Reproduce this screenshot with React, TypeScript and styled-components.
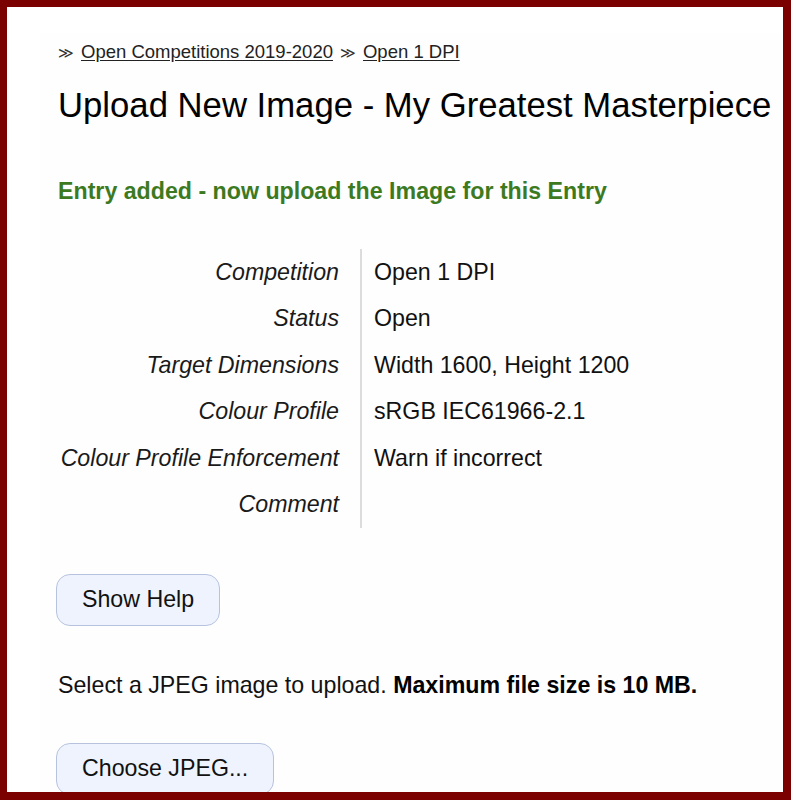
import React from "react";
import styled, { createGlobalStyle } from "styled-components";

const GlobalStyle = createGlobalStyle`
  html, body {
    margin: 0;
    padding: 0;
    background: #ffffff;
  }
  body {
    font-family: "Liberation Sans", Arial, Helvetica, sans-serif;
    color: #111111;
  }
`;

const Frame = styled.div`
  box-sizing: border-box;
  width: 791px;
  height: 800px;
  overflow: hidden;
  border-style: solid;
  border-color: #7b0000;
  border-width: 7px 8px 8px 7px;
  background: #ffffff;
  padding: 26px 0 0 33px;
`;

const Main = styled.main`
  background: #fefefe;
  min-height: 800px;
  padding: 8px 0 0 18px;
`;

const Breadcrumb = styled.nav`
  font-size: 18.5px;
  line-height: 21px;
  color: #222222;
  white-space: nowrap;
`;

const Sep = styled.span<{ $first?: boolean }>`
  display: inline-block;
  width: 13px;
  margin: 0 10px 0 ${(p) => (p.$first ? "0" : "7px")};
  font-family: "DejaVu Sans", sans-serif;
  font-size: 15px;
  color: #333333;
`;

const Crumb = styled.a`
  color: #222222;
  text-decoration: underline;
  text-underline-offset: 2px;
`;

const Title = styled.h1`
  margin: 22px 0 0;
  font-size: 34.7px;
  line-height: 39px;
  font-weight: 400;
  color: #000000;
  white-space: nowrap;
`;

const Notice = styled.p`
  margin: 53px 0 0;
  font-size: 23.2px;
  line-height: 26.5px;
  font-weight: 700;
  color: #3d7a1f;
`;

const Details = styled.dl`
  margin: 44px 0 0;
  display: grid;
  grid-template-columns: 302px 1fr;
  font-size: 23.2px;
  line-height: 26.5px;
`;

const Label = styled.dt`
  margin: 0;
  padding: 10px 21px 10px 0;
  text-align: right;
  font-style: italic;
  color: #1a1a1a;
  white-space: nowrap;
`;

const Value = styled.dd`
  margin: 0;
  min-height: 26.5px;
  padding: 10px 0 10px 12px;
  border-left: 2px solid #dcdcdc;
  color: #111111;
  white-space: nowrap;
`;

const Button = styled.button<{ $top: number }>`
  display: block;
  margin: ${(p) => p.$top}px 0 0 -2px;
  padding: 11px 25px 13px;
  font-family: "Liberation Sans", Arial, sans-serif;
  font-size: 23.2px;
  line-height: 26.5px;
  color: #111111;
  background: #eef3fd;
  border: 1px solid #b7c3de;
  border-radius: 14px;
  cursor: pointer;
`;

const Instruction = styled.p`
  margin: 46px 0 0;
  font-size: 23.2px;
  line-height: 26.5px;
  color: #111111;
  white-space: nowrap;

  strong {
    font-weight: 700;
    color: #000000;
  }
`;

const rows: [string, string][] = [
  ["Competition", "Open 1 DPI"],
  ["Status", "Open"],
  ["Target Dimensions", "Width 1600, Height 1200"],
  ["Colour Profile", "sRGB IEC61966-2.1"],
  ["Colour Profile Enforcement", "Warn if incorrect"],
  ["Comment", ""],
];

export default function App() {
  return (
    <>
      <GlobalStyle />
      <Frame>
        <Main>
          <Breadcrumb>
            <Sep $first>≫</Sep>
            <Crumb href="#">Open Competitions 2019-2020</Crumb>
            <Sep>≫</Sep>
            <Crumb href="#">Open 1 DPI</Crumb>
          </Breadcrumb>
          <Title>Upload New Image - My Greatest Masterpiece</Title>
          <Notice>Entry added - now upload the Image for this Entry</Notice>
          <Details>
            {rows.map(([k, v]) => (
              <React.Fragment key={k}>
                <Label>{k}</Label>
                <Value>{v}</Value>
              </React.Fragment>
            ))}
          </Details>
          <Button $top={46}>Show Help</Button>
          <Instruction>
            Select a JPEG image to upload. <strong>Maximum file size is 10 MB.</strong>
          </Instruction>
          <Button $top={44}>Choose JPEG...</Button>
        </Main>
      </Frame>
    </>
  );
}
